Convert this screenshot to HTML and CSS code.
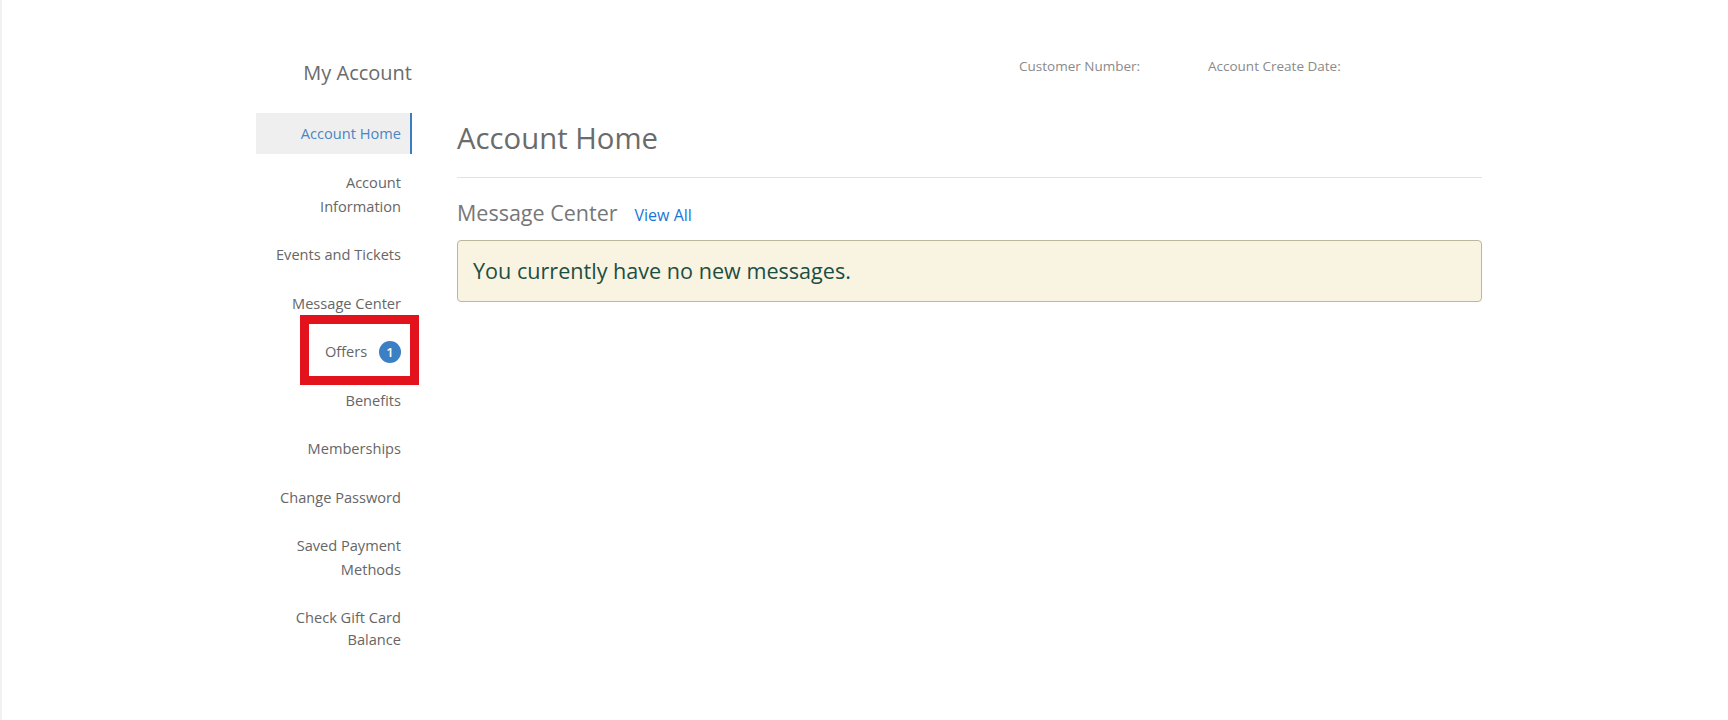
FILE: index.html
```html
<!DOCTYPE html>
<html lang="en">
<head>
<meta charset="utf-8">
<title>My Account</title>
<link rel="stylesheet" href="styles.css">
</head>
<body>
<div class="page">
  <aside class="sidebar">
    <h1 class="side-title">My Account</h1>
    <ul class="nav">
      <li><a class="nav-link active" href="#">Account Home</a></li>
      <li><a class="nav-link" href="#">Account<br>Information</a></li>
      <li><a class="nav-link" href="#">Events and Tickets</a></li>
      <li><a class="nav-link" href="#">Message Center</a></li>
      <li><a class="nav-link highlight" href="#">Offers <span class="badge">1</span></a></li>
      <li><a class="nav-link" href="#">Benefits</a></li>
      <li><a class="nav-link" href="#">Memberships</a></li>
      <li><a class="nav-link" href="#">Change Password</a></li>
      <li><a class="nav-link" href="#">Saved Payment<br>Methods</a></li>
      <li><a class="nav-link tight" href="#">Check Gift Card<br>Balance</a></li>
    </ul>
  </aside>
  <main class="main">
    <div class="meta">
      <span class="meta-item cust">Customer Number:</span>
      <span class="meta-item">Account Create Date:</span>
    </div>
    <h2 class="page-title">Account Home</h2>
    <div class="section-head">
      <h3 class="section-title">Message Center</h3>
      <a class="view-all" href="#">View All</a>
    </div>
    <div class="alert">You currently have no new messages.</div>
  </main>
</div>
</body>
</html>
```

FILE: styles.css
```css
html, body {
  margin: 0;
  padding: 0;
  background: #ffffff;
}
body {
  font-family: "Open Sans", "Liberation Sans", sans-serif;
  color: #666;
  border-left: 2px solid #f1f1f1;
  min-height: 720px;
  box-sizing: border-box;
}
.page {
  display: flex;
  padding-left: 254px;
  padding-top: 59px;
}
.sidebar {
  width: 156px;
  flex: none;
}
.side-title {
  margin: 0;
  font-size: 20px;
  line-height: 28px;
  font-weight: 400;
  color: #6b6b6b;
  text-align: right;
  padding-right: 0;
}
.nav {
  list-style: none;
  margin: 26px 0 0 0;
  padding: 0;
  display: flex;
  flex-direction: column;
  gap: 8px;
}
.nav-link {
  display: block;
  text-align: right;
  padding: 8px 9px 8.5px 10px;
  margin-right: 2px;
  font-size: 14.6px;
  line-height: 24px;
  color: #666;
  text-decoration: none;
  position: relative;
}
.nav-link.tight {
  line-height: 22px;
}
.nav-link.active {
  background: #efefef;
  color: #4a86c5;
  margin-right: 0;
  border-right: 2px solid #3a7dc2;
}
.badge {
  display: inline-block;
  width: 22px;
  height: 22px;
  line-height: 22px;
  border-radius: 50%;
  background: #3b7fc4;
  color: #fff;
  font-size: 13px;
  font-weight: 600;
  text-align: center;
  margin-left: 8px;
  vertical-align: 0;
}
.nav-link.highlight::after {
  content: "";
  position: absolute;
  left: 44px;
  right: -9px;
  top: -16px;
  bottom: -13px;
  border: 9px solid #e3131d;
}
.main {
  margin-left: 45px;
  width: 1025px;
  flex: none;
}
.meta {
  display: flex;
  margin-top: -3px;
  padding-left: 562px;
  font-size: 13.5px;
  line-height: 20px;
  color: #8a8a8a;
}
.meta-item.cust {
  width: 189px;
}
.page-title {
  margin: 44px 0 0 0;
  font-size: 29.3px;
  line-height: 36px;
  font-weight: 400;
  color: #6b6b6b;
  padding-bottom: 21px;
  border-bottom: 1px solid #e3e3e3;
}
.section-head {
  display: flex;
  align-items: baseline;
  gap: 17px;
  margin-top: 20px;
}
.section-title {
  margin: 0;
  font-size: 21.5px;
  line-height: 30px;
  font-weight: 400;
  color: #777;
}
.view-all {
  font-size: 16px;
  color: #1a75d8;
  text-decoration: none;
}
.alert {
  margin-top: 12px;
  background: #f8f4e1;
  border: 1px solid #bcb69c;
  border-radius: 4px;
  padding: 15px 15px;
  font-size: 21.6px;
  line-height: 29.5px;
  color: #1d4e44;
}
```
